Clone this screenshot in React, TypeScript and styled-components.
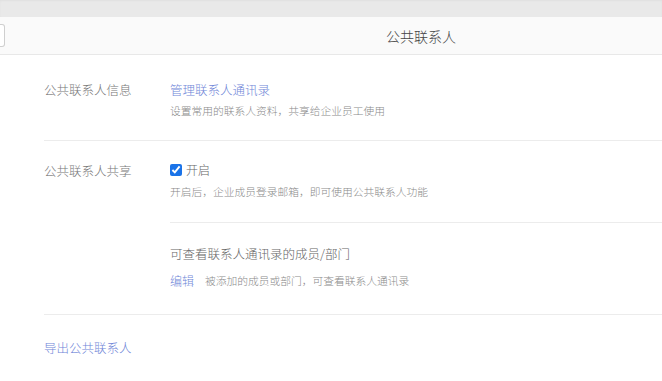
import { FC } from 'react'
import styled, { createGlobalStyle } from 'styled-components'

const GlobalStyle = createGlobalStyle`
  body {
    margin: 0;
    background: #fff;
    font-family: "Noto Sans CJK SC", "Noto Sans", sans-serif;
    font-weight: 300;
  }
`

const App: FC = () => {
  return (
    <Page>
      <GlobalStyle />
      <TopStrip />
      <Header>
        <SearchBox />
        <Title>公共联系人</Title>
      </Header>

      <Content>
        <Section>
          <Label>公共联系人信息</Label>
          <Body>
            <Link>管理联系人通讯录</Link>
            <Desc $gap={2}>设置常用的联系人资料，共享给企业员工使用</Desc>
          </Body>
        </Section>

        <Section $top={20} $bottom={0}>
          <Label>公共联系人共享</Label>
          <Body>
            <SubBlock>
              <CheckRow>
                <Check type="checkbox" defaultChecked />
                <CheckText>开启</CheckText>
              </CheckRow>
              <Desc $gap={3}>开启后，企业成员登录邮箱，即可使用公共联系人功能</Desc>
            </SubBlock>
            <SubBlock $last>
              <SubTitle>可查看联系人通讯录的成员/部门</SubTitle>
              <EditRow>
                <Link>编辑</Link>
                <Desc $gap={0}>被添加的成员或部门，可查看联系人通讯录</Desc>
              </EditRow>
            </SubBlock>
          </Body>
        </Section>

        <Footer>
          <Link>导出公共联系人</Link>
        </Footer>
      </Content>
    </Page>
  )
}

const Page = styled.div`
  width: 662px;
  height: 381px;
  overflow: hidden;
  background: #fff;
`

const TopStrip = styled.div`
  height: 17px;
  background: #e9e9e9;
  box-shadow: inset 0 1px 2px rgba(0, 0, 0, 0.04);
`

const Header = styled.div`
  height: 37px;
  display: flex;
  align-items: center;
  background: #fafafa;
  border-bottom: 1px solid #e8e8e8;
`

const SearchBox = styled.div`
  width: 4px;
  height: 21px;
  margin-top: -1px;
  background: #fff;
  border: 1px solid #cfcfcf;
  border-left: none;
  border-radius: 0 3px 3px 0;
`

const Title = styled.div`
  margin-left: 381px;
  font-size: 14px;
  line-height: 20px;
  color: #444;
`

const Content = styled.div`
  padding-left: 44px;
`

const Section = styled.div<{ $top?: number; $bottom?: number }>`
  display: grid;
  grid-template-columns: 126px 1fr;
  padding-top: ${(p) => p.$top ?? 25}px;
  padding-bottom: ${(p) => p.$bottom ?? 20}px;
  border-bottom: 1px solid #ececec;
`

const Label = styled.div`
  font-size: 12.5px;
  line-height: 20px;
  color: #777;
`

const Body = styled.div`
  display: flex;
  flex-direction: column;
`

const Link = styled.a`
  font-size: 12.5px;
  line-height: 20px;
  color: #6f86d8;
  cursor: pointer;
`

const Desc = styled.div<{ $gap: number }>`
  margin-top: ${(p) => p.$gap}px;
  font-size: 10.75px;
  line-height: 18px;
  color: #8a8a8a;
`

const SubBlock = styled.div<{ $last?: boolean }>`
  padding-top: ${(p) => (p.$last ? 21 : 0)}px;
  padding-bottom: ${(p) => (p.$last ? 23 : 21)}px;
  border-bottom: ${(p) => (p.$last ? 'none' : '1px solid #ececec')};
`

const CheckRow = styled.div`
  display: flex;
  align-items: center;
  height: 20px;
  margin-top: -1px;
`

const Check = styled.input`
  width: 12px;
  height: 12px;
  margin: 0 4px 0 0;
  accent-color: #1a73e8;
`

const CheckText = styled.span`
  font-size: 12px;
  line-height: 20px;
  color: #666;
`

const SubTitle = styled.div`
  font-size: 12.5px;
  line-height: 20px;
  color: #666;
`

const EditRow = styled.div`
  display: flex;
  align-items: center;
  gap: 11px;
  margin-top: 7px;

  ${Link} {
    font-size: 12px;
  }
`

const Footer = styled.div`
  padding-top: 19px;
`

export default App
